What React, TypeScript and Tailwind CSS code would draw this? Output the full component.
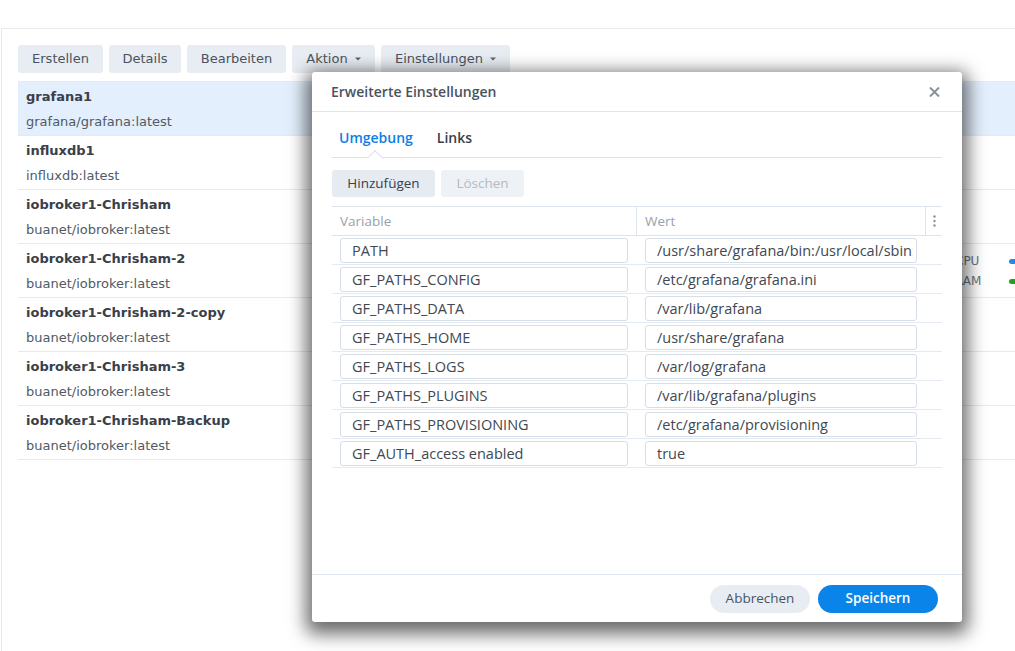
import React from "react";

const rows = [
  { name: "grafana1", image: "grafana/grafana:latest", selected: true },
  { name: "influxdb1", image: "influxdb:latest" },
  { name: "iobroker1-Chrisham", image: "buanet/iobroker:latest" },
  { name: "iobroker1-Chrisham-2", image: "buanet/iobroker:latest", stats: true },
  { name: "iobroker1-Chrisham-2-copy", image: "buanet/iobroker:latest" },
  { name: "iobroker1-Chrisham-3", image: "buanet/iobroker:latest" },
  { name: "iobroker1-Chrisham-Backup", image: "buanet/iobroker:latest" },
];

const envs: [string, string][] = [
  ["PATH", "/usr/share/grafana/bin:/usr/local/sbin:/usr/local/bin:/usr/sbin:/usr/bin:/sbin:/bin"],
  ["GF_PATHS_CONFIG", "/etc/grafana/grafana.ini"],
  ["GF_PATHS_DATA", "/var/lib/grafana"],
  ["GF_PATHS_HOME", "/usr/share/grafana"],
  ["GF_PATHS_LOGS", "/var/log/grafana"],
  ["GF_PATHS_PLUGINS", "/var/lib/grafana/plugins"],
  ["GF_PATHS_PROVISIONING", "/etc/grafana/provisioning"],
  ["GF_AUTH_access enabled", "true"],
];

function Caret() {
  return (
    <svg width="6" height="4" viewBox="0 0 6 4" className="ml-[7px]">
      <path d="M0 0.5 L6 0.5 L3 3.5 Z" fill="#5a6270" />
    </svg>
  );
}

function ToolButton({ label, caret, w }: { label: string; caret?: boolean; w: string }) {
  return (
    <div
      className={`${w} h-[28px] flex items-center justify-center rounded-[3px] bg-[#e8edf3] text-[13px] text-[#4a5360]`}
    >
      {label}
      {caret && <Caret />}
    </div>
  );
}

function Field({ text, w, ml, pr }: { text: string; w: string; ml: string; pr: string }) {
  return (
    <div className={`${ml} ${w} ${pr} h-[25px] border border-[#d6dee7] rounded-[3px] pl-[11px] leading-[23px]`}>
      <div className="overflow-hidden whitespace-nowrap">{text}</div>
    </div>
  );
}

export default function App() {
  return (
    <div className="relative w-[1015px] h-[651px] overflow-hidden bg-white font-['DejaVu_Sans',sans-serif]">
      <div className="pt-[28px] h-full">
        <div className="ml-[1px] h-full border-t border-l border-[#e6e9ee] pl-4 pt-4">
          <div className="flex gap-[6px]">
            <ToolButton label="Erstellen" w="w-[85px]" />
            <ToolButton label="Details" w="w-[72px]" />
            <ToolButton label="Bearbeiten" w="w-[99px]" />
            <ToolButton label="Aktion" caret w="w-[83px]" />
            <ToolButton label="Einstellungen" caret w="w-[129px]" />
          </div>
          <div className="mt-2 border-t border-[#e6e9ee]">
            {rows.map((r) => (
              <div
                key={r.name}
                className={`h-[54px] border-b border-[#e6e9ee] flex pl-[8px] pt-[3px] ${
                  r.selected ? "bg-[#e3effc]" : ""
                }`}
              >
                <div className="flex flex-col text-[13px]">
                  <span className="font-bold text-[#394049] leading-[24px]">{r.name}</span>
                  <span className="text-[#515a64] leading-[26px]">{r.image}</span>
                </div>
                {r.stats && (
                  <div className="ml-auto w-[60px] pt-[4px] flex flex-col leading-[20px] text-[12px] text-[#6b7480]">
                    <div className="flex items-center">
                      <span className="w-[54px]">CPU</span>
                      <span className="h-[5px] flex-1 rounded-l-full bg-[#1a8cf0]" />
                    </div>
                    <div className="flex items-center">
                      <span className="w-[54px]">RAM</span>
                      <span className="h-[5px] flex-1 rounded-l-full bg-[#1fa31f]" />
                    </div>
                  </div>
                )}
              </div>
            ))}
          </div>
        </div>
      </div>

      {/* Modal */}
      <div className="absolute left-[312px] top-[72px] w-[650px] h-[550px] bg-white rounded-[3px] shadow-[0_6px_18px_6px_rgba(0,0,0,0.58)] flex flex-col font-['Open_Sans',sans-serif]">
        <div className="h-[40px] shrink-0 border-b border-[#dfe5ec] flex items-center justify-between pl-[19px] pr-[22px]">
          <span className="text-[14px] font-semibold text-[#4a5260]">Erweiterte Einstellungen</span>
          <svg width="11" height="10" viewBox="0 0 11 10">
            <path d="M1 0.5 L10 9.5 M10 0.5 L1 9.5" stroke="#8a9099" strokeWidth="2" />
          </svg>
        </div>
        <div className="px-[20px] flex flex-col">
          <div className="relative h-[46px] border-b border-[#dae3ed] pt-[16px] pl-[7px] flex gap-[24px] leading-[20px] text-[14px] font-semibold">
            <span className="text-[#0b80e6]">Umgebung</span>
            <span className="text-[#394049]">Links</span>
            <div className="absolute left-[38px] bottom-[-5px] w-[10px] h-[10px] rotate-45 bg-white border-l border-t border-[#dae3ed]" />
          </div>
          <div className="mt-[12px] flex gap-[6px] text-[13.5px]">
            <div className="w-[103px] h-[27px] rounded-[3px] bg-[#e6ebf1] text-[#39404a] flex items-center justify-center">
              Hinzufügen
            </div>
            <div className="w-[83px] h-[27px] rounded-[3px] bg-[#eef1f5] text-[#b3bbc5] flex items-center justify-center">
              Löschen
            </div>
          </div>
          <div className="mt-[9px]">
            <div className="h-[30px] border-t border-b border-[#dde4ec] flex text-[13.5px] text-[#98a1ab]">
              <div className="w-[305px] border-r border-[#dde4ec] pl-[8px] flex items-center">Variable</div>
              <div className="w-[289px] border-r border-[#dde4ec] pl-[8px] flex items-center">Wert</div>
              <div className="flex-1 flex items-center justify-center">
                <svg width="3" height="12" viewBox="0 0 3 12">
                  <circle cx="1.5" cy="1.5" r="1.2" fill="#8a929c" />
                  <circle cx="1.5" cy="6" r="1.2" fill="#8a929c" />
                  <circle cx="1.5" cy="10.5" r="1.2" fill="#8a929c" />
                </svg>
              </div>
            </div>
            {envs.map(([k, v]) => (
              <div key={k} className="h-[29px] border-b border-[#e4eaf1] flex items-center text-[14.5px] text-[#404852]">
                <Field text={k} w="w-[288px]" ml="ml-[8px]" pr="pr-[11px]" />
                <Field text={v} w="w-[272px]" ml="ml-[17px]" pr="pr-[3px]" />
              </div>
            ))}
          </div>
        </div>
        <div className="mt-auto h-[48px] shrink-0 border-t border-[#dfe5ec] flex items-center justify-end pr-[24px] gap-[8px] text-[13.5px]">
          <div className="w-[100px] h-[28px] rounded-full bg-[#e8edf4] text-[#4a5360] flex items-center justify-center">
            Abbrechen
          </div>
          <div className="w-[120px] h-[28px] rounded-full bg-[#0b84ea] text-white font-semibold flex items-center justify-center">
            Speichern
          </div>
        </div>
      </div>
    </div>
  );
}
